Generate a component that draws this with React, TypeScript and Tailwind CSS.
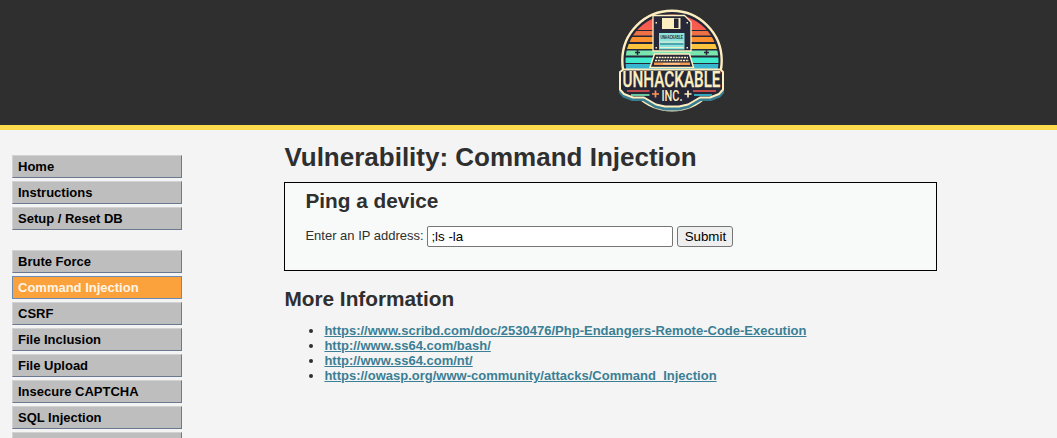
import React from "react";

const mainLinks = ["Home", "Instructions", "Setup / Reset DB"];
const attackLinks = [
  "Brute Force",
  "Command Injection",
  "CSRF",
  "File Inclusion",
  "File Upload",
  "Insecure CAPTCHA",
  "SQL Injection",
  "",
];
const resources = [
  "https://www.scribd.com/doc/2530476/Php-Endangers-Remote-Code-Execution",
  "http://www.ss64.com/bash/",
  "http://www.ss64.com/nt/",
  "https://owasp.org/www-community/attacks/Command_Injection",
];

function Logo() {
  return (
    <svg width="124" height="116" viewBox="0 0 124 116" className="block">
      <defs>
        <clipPath id="disc">
          <circle cx="62" cy="61" r="46.5" />
        </clipPath>
        <linearGradient id="sunset" x1="0" y1="0" x2="0" y2="1">
          <stop offset="0" stopColor="#fb4d58" />
          <stop offset="1" stopColor="#f5614b" />
        </linearGradient>
      </defs>
      <circle cx="62" cy="60.5" r="49.7" fill="#252636" stroke="#fdeec0" strokeWidth="2.4" />
      <g clipPath="url(#disc)">
        <path d="M10 14h104v16H10z" fill="url(#sunset)" />
        <path d="M10 31h104v4.500H10z" fill="#ee7146" />
        <path d="M10 37h104v5H10z" fill="#fb9030" />
        <path d="M10 44h104v5H10z" fill="#fbc43c" />
        <path d="M10 50.5h104v5H10z" fill="#79e6b0" />
        <path d="M10 57.5h104v5.5H10z" fill="#40e8cc" />
        <path d="M10 64h104v6H10z" fill="#39b5cf" />
      </g>
      <path d="M25 52.500h5M27.500 50v5M94 52.500h5M96.500 50v5" stroke="#252636" strokeWidth="1.5" />
      {/* floppy disk */}
      <path d="M43 15.500h31.500l6.500 6.500v29H43z" fill="#262738" stroke="#fdeec0" strokeWidth="1.300" />
      <path d="M52 18h18.500v11H52z" fill="#fdeec0" />
      <path d="M64 18.500h4.500v9.500H64z" fill="#252636" />
      <path d="M49 33h25.500v16.500H49z" fill="#8ce2dc" />
      <path d="M50 42h23.500M50 47.500h23.500" stroke="#e9f1ce" strokeWidth="1" />
      <path d="M50 44h23.500" stroke="#3490a3" strokeWidth="1.500" />
      <text x="50.500" y="39.200" fontSize="5.500" fontWeight="700" textLength="22.500" lengthAdjust="spacingAndGlyphs" fill="#1f2536" fontFamily="Liberation Sans, sans-serif">UNHACKABLE</text>
      <path d="M45.500 22H47v1.500h-1.500zM76.500 22H78v1.500h-1.500zM45.500 47H47v1.500h-1.500zM76.500 47H78v1.500h-1.500z" fill="#fdeec0" />
      {/* keyboard */}
      <path d="M44.500 54h35l4 13.500h-43.500z" fill="#262738" stroke="#fdeec0" strokeWidth="1.5" />
      <path d="M46 57.500h32M45 60.500h34" stroke="#fdeec0" strokeWidth="1.600" strokeDasharray="2 0.8" />
      <path d="M44 63.800h36" stroke="#f19a50" strokeWidth="2.600" />
      <path d="M53 63.800h17" stroke="#fdc99a" strokeWidth="1.500" />
      <path d="M40 68.700h44" stroke="#39b5cf" strokeWidth="1.500" />
      {/* name plate */}
      <path d="M14 70h97l3 3v18.500l-4 4.500-9 3.500H91l-12 7-10 2.500H55l-10-2.500-12-7H22l-9-3.500-4-4.500V73z" fill="#397d91" transform="translate(0 1.500)" />
      <path d="M13.500 69.500h97l2.500 2.500v17.500l-4 4.500-9 3.500H90l-12 7-9 2H55l-9-2-12-7H23L14 94l-4-4.500V72z" fill="#252636" stroke="#fdeec0" strokeWidth="2" strokeLinejoin="round" />
      <text x="12.500" y="87.300" fontSize="22" fontWeight="500" textLength="98" lengthAdjust="spacingAndGlyphs" fill="#fdeec0" stroke="#fdeec0" strokeWidth="0.25" fontFamily="Roboto, Liberation Sans, sans-serif">UNHACKABLE</text>
      <path d="M17 91h22.500M83 91h23" stroke="#f6574f" strokeWidth="1.700" />
      <path d="M21 95h18.500" stroke="#78e5b0" strokeWidth="1.700" />
      <path d="M84 95h18" stroke="#36bfd2" strokeWidth="1.700" />
      <path d="M42 94h7M45.500 90.500v7" stroke="#fb9556" strokeWidth="1.700" />
      <path d="M74.500 94h7M78 90.500v7" stroke="#fdeec0" strokeWidth="1.700" />
      <text x="51.500" y="100.800" fontSize="15" fontWeight="500" textLength="21" lengthAdjust="spacingAndGlyphs" fill="#fdeec0" fontFamily="Roboto, Liberation Sans, sans-serif">INC.</text>
    </svg>
  );
}

function MenuGroup({ items }: { items: string[] }) {
  return (
    <ul className="flex flex-col gap-[3px]">
      {items.map((item) => (
        <li
          key={item}
          className={
            item === "Command Injection"
              ? "h-[23px] border border-[#6b8bb5] bg-[#fba23c] pl-[5px] leading-[21px] text-[#fff5e6]"
              : "h-[23px] border border-t-[#d2d2d2] border-r-[#6b7890] border-b-[#6b7890] border-l-[#d2d2d2] bg-[#bebebe] pl-[5px] leading-[21px] text-black"
          }
        >
          {item}
        </li>
      ))}
    </ul>
  );
}

export default function App() {
  return (
    <div className="h-[438px] overflow-hidden bg-[#f4f4f4] font-['Liberation_Sans',Arial,sans-serif] text-[13px] leading-[15px] text-[#2f2f2f]">
      <header className="h-[130px] border-b-[5px] border-[#ffda4f] bg-[#2f2f2f] pl-[610px]">
        <Logo />
      </header>
      <div className="flex pl-3">
        <nav className="flex w-[170px] shrink-0 flex-col gap-5 pt-[25px] font-bold">
          <MenuGroup items={mainLinks} />
          <MenuGroup items={attackLinks} />
        </nav>
        <main className="ml-[102.4px] w-[653px] pt-3">
          <h1 className="text-[26px] leading-[30px] font-bold">Vulnerability: Command Injection</h1>
          <section className="mt-[10px] h-[89px] border border-black bg-[#f8faf9] pt-[6px] pl-5">
            <h2 className="text-[20.8px] leading-6 font-bold">Ping a device</h2>
            <form className="mt-[13px] flex items-center" onSubmit={(e) => e.preventDefault()}>
              <label htmlFor="ip" className="w-[122px] pb-[2px]">Enter an IP address:</label>
              <input id="ip" defaultValue=";ls -la" className="h-[21px] w-[246px] rounded-[2px] border border-[#767676] bg-white px-[3px] text-[13.333px] text-black" />
              <button className="ml-1 h-[21px] w-14 rounded-[3px] border border-[#767676] bg-[#efefef] text-[13.333px] leading-[19px] text-black">Submit</button>
            </form>
          </section>
          <h2 className="mt-4 text-[20.8px] leading-6 font-bold">More Information</h2>
          <ul className="mt-3 list-disc pl-10 font-bold">
            {resources.map((url) => (
              <li key={url}>
                <a href={url} className="text-[#3b7f94] underline">{url}</a>
              </li>
            ))}
          </ul>
        </main>
      </div>
    </div>
  );
}
